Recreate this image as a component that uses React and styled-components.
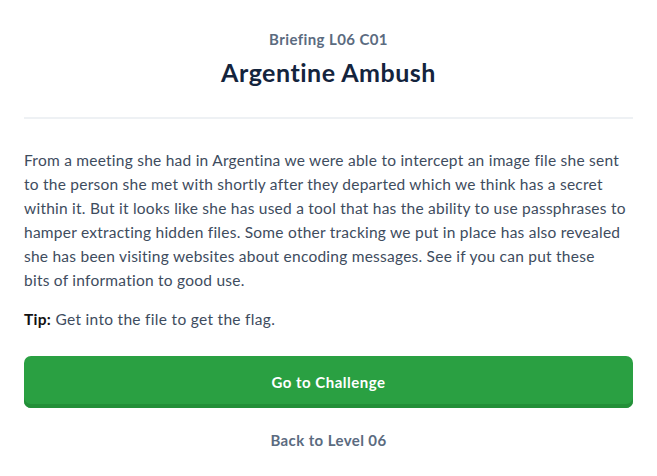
import React from "react";
import styled, { createGlobalStyle } from "styled-components";

const Global = createGlobalStyle`
  html, body { margin: 0; padding: 0; background: #fff; }
  body { font-family: "Lato", "Open Sans", sans-serif; -webkit-font-smoothing: antialiased; }
`;

const Page = styled.div`
  padding: 29px 24px 0;
  display: flex;
  flex-direction: column;
`;

const Header = styled.header`
  display: flex;
  flex-direction: column;
  align-items: center;
  padding-bottom: 30px;
  border-bottom: 2px solid #eef1f4;
`;

const Kicker = styled.div`
  font-size: 15px;
  font-weight: 700;
  letter-spacing: 0.4px;
  color: #5b6b80;
  line-height: 20px;
`;

const Title = styled.h1`
  margin: 8px 0 0;
  font-size: 25px;
  font-weight: 700;
  letter-spacing: 0.5px;
  color: #14243d;
  line-height: 30px;
`;

const Body = styled.p`
  margin: 29px 0 0;
  font-size: 15.5px;
  letter-spacing: 0.24px;
  line-height: 24px;
  color: #3e4c5e;
`;

const Tip = styled.p`
  margin: 15px 0 0;
  font-size: 15.5px;
  letter-spacing: 0.3px;
  line-height: 24px;
  color: #3e4c5e;
  b { color: #111; font-weight: 700; }
`;

const Button = styled.button`
  margin-top: 25px;
  height: 52px;
  border: none;
  border-radius: 7px;
  background: #2aa042;
  box-shadow: inset 0 -4px 0 #238f38;
  color: #fff;
  font-family: inherit;
  font-size: 15px;
  font-weight: 700;
  letter-spacing: 0.5px;
  cursor: pointer;
`;

const BackLink = styled.a`
  margin-top: 22px;
  align-self: center;
  font-size: 15px;
  font-weight: 700;
  letter-spacing: 0.4px;
  color: #5b6b80;
  text-decoration: none;
  line-height: 20px;
`;

export default function App() {
  return (
    <>
      <Global />
      <Page>
        <Header>
          <Kicker>Briefing L06 C01</Kicker>
          <Title>Argentine Ambush</Title>
        </Header>
        <Body>
          From a meeting she had in Argentina we were able to intercept an image file she sent<br />
          to the person she met with shortly after they departed which we think has a secret<br />
          within it. But it looks like she has used a tool that has the ability to use passphrases to<br />
          hamper extracting hidden files. Some other tracking we put in place has also revealed<br />
          she has been visiting websites about encoding messages. See if you can put these<br />
          bits of information to good use.
        </Body>
        <Tip>
          <b>Tip:</b> Get into the file to get the flag.
        </Tip>
        <Button>Go to Challenge</Button>
        <BackLink href="#">Back to Level 06</BackLink>
      </Page>
    </>
  );
}
